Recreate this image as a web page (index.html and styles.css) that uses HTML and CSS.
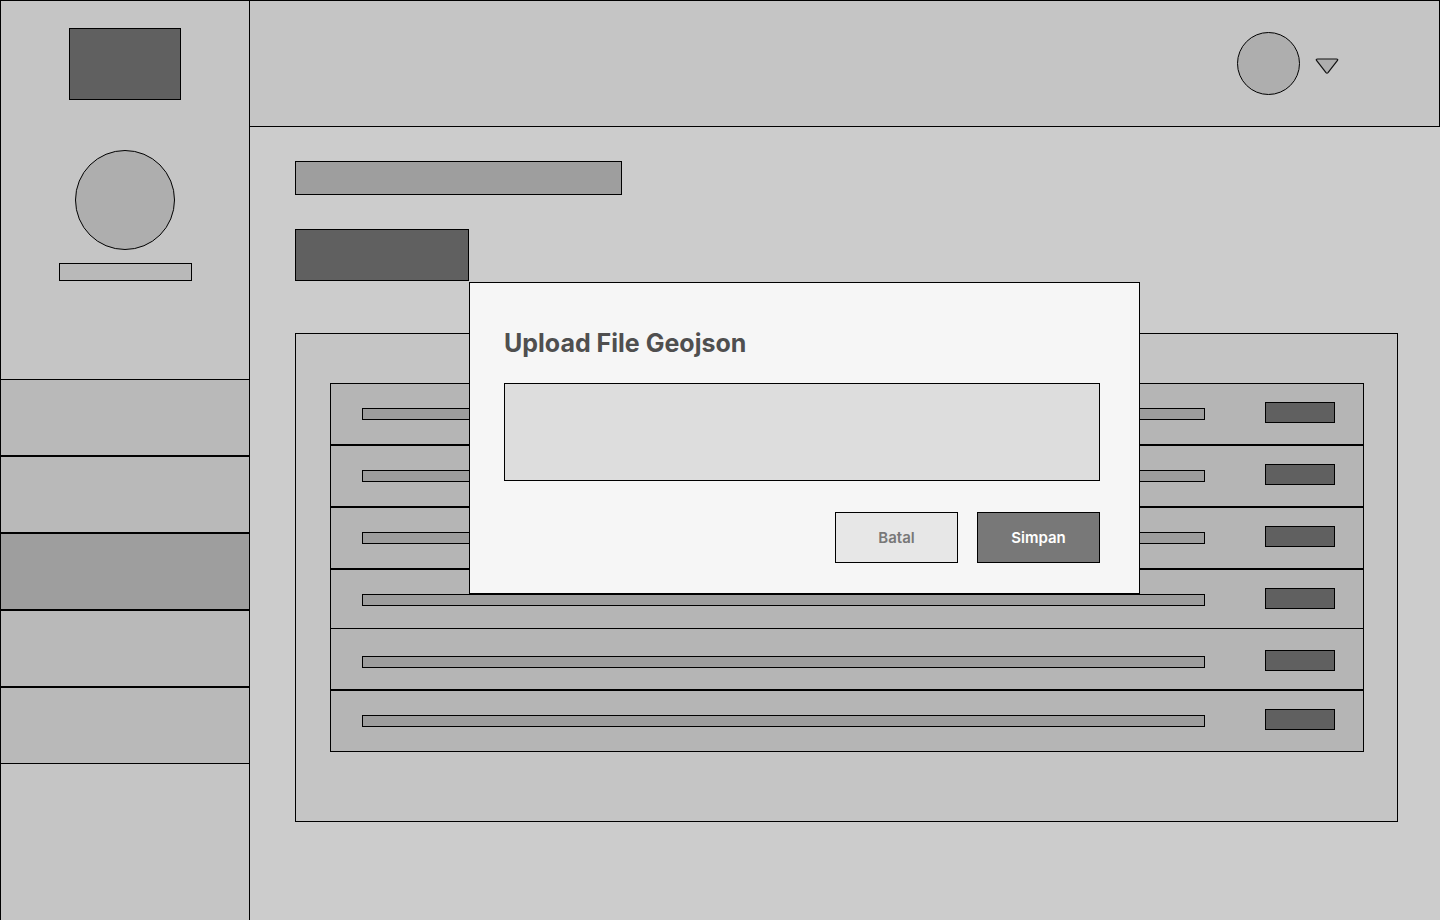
FILE: index.html
```html
<!DOCTYPE html>
<html lang="id">
<head>
<meta charset="utf-8">
<meta name="viewport" content="width=device-width, initial-scale=1">
<title>Upload File Geojson</title>
<link rel="stylesheet" href="styles.css">
</head>
<body>
<div class="app">
  <aside class="sidebar">
    <div class="logo"></div>
    <div class="profile-photo"></div>
    <div class="profile-name"></div>
    <nav class="menu">
      <a class="menu-item" href="#" aria-label="Menu 1"></a>
      <a class="menu-item" href="#" aria-label="Menu 2"></a>
      <a class="menu-item menu-item-active" href="#" aria-label="Menu 3" aria-current="page"></a>
      <a class="menu-item" href="#" aria-label="Menu 4"></a>
      <a class="menu-item" href="#" aria-label="Menu 5"></a>
    </nav>
  </aside>
  <div class="page">
    <header class="topbar">
      <div class="avatar"></div>
      <button class="account-toggle" type="button" aria-label="Akun">
        <svg class="caret" width="24" height="18" viewBox="0 0 24 18" aria-hidden="true">
          <path d="M2.6 2H21.4Q23.6 2 22.3 3.7L13 15.6Q12 16.7 11 15.6L1.7 3.7Q.4 2 2.6 2Z" fill="#aeaeae" stroke="#111" stroke-width="1.2"/>
        </svg>
      </button>
    </header>
    <main class="content">
      <div class="page-title"></div>
      <button class="add-button" type="button" aria-label="Tambah"></button>
      <section class="panel">
        <ul class="records">
          <li class="record"><span class="record-text"></span><button class="record-action" type="button" aria-label="Aksi 1"></button></li>
          <li class="record"><span class="record-text"></span><button class="record-action" type="button" aria-label="Aksi 2"></button></li>
          <li class="record"><span class="record-text"></span><button class="record-action" type="button" aria-label="Aksi 3"></button></li>
          <li class="record"><span class="record-text"></span><button class="record-action" type="button" aria-label="Aksi 4"></button></li>
          <li class="record record-overlap"><span class="record-text"></span><button class="record-action" type="button" aria-label="Aksi 5"></button></li>
          <li class="record"><span class="record-text"></span><button class="record-action" type="button" aria-label="Aksi 6"></button></li>
        </ul>
      </section>
    </main>
  </div>
  <form class="dialog" role="dialog" aria-labelledby="dialog-title">
    <h1 class="dialog-title" id="dialog-title">Upload File Geojson</h1>
    <div class="dropzone">
      <input class="file-input" type="file" aria-labelledby="dialog-title">
    </div>
    <div class="dialog-actions">
      <button class="button" type="button">Batal</button>
      <button class="button button-primary" type="button">Simpan</button>
    </div>
  </form>
</div>
</body>
</html>
```
FILE: styles.css
```css
*,
*::before,
*::after {
  box-sizing: border-box;
}

body {
  margin: 0;
  background: #ccc;
  font-family: Inter, "Liberation Sans", sans-serif;
}

button {
  margin: 0;
  padding: 0;
  border-radius: 0;
  font-family: inherit;
  cursor: pointer;
}

.app {
  position: relative;
  display: flex;
  min-height: 100vh;
}

.sidebar {
  flex: none;
  display: flex;
  flex-direction: column;
  align-items: center;
  width: 250px;
  padding-top: 27px;
  border: 1px solid #000;
  border-bottom: 0;
  background: #c5c5c5;
}

.logo {
  width: 112px;
  height: 72px;
  border: 1px solid #000;
  background: #606060;
}

.profile-photo {
  width: 100px;
  height: 100px;
  margin-top: 50px;
  border: 1px solid #000;
  border-radius: 50%;
  background: #aeaeae;
}

.profile-name {
  width: 133px;
  height: 18px;
  margin-top: 13px;
  border: 1px solid #000;
  background: #b9b9b9;
}

.menu {
  align-self: stretch;
  margin-top: 98px;
}

.menu-item {
  display: block;
  height: 77px;
  border: solid #000;
  border-width: 1px 0;
  background: #b9b9b9;
}

.menu-item-active {
  background: #9e9e9e;
}

.page {
  flex: 1;
  min-width: 0;
}

.topbar {
  display: flex;
  align-items: center;
  justify-content: flex-end;
  gap: 15px;
  height: 127px;
  padding-right: 100px;
  border: 1px solid #000;
  border-left: 0;
  background: #c5c5c5;
}

.avatar {
  width: 63px;
  height: 63px;
  border: 1px solid #000;
  border-radius: 50%;
  background: #aeaeae;
}

.account-toggle {
  padding-top: 4px;
  border: 0;
  background: none;
}

.caret {
  display: block;
}

.content {
  padding: 34px 42px 98px 45px;
}

.page-title {
  width: 327px;
  height: 34px;
  border: 1px solid #000;
  background: #9e9e9e;
}

.add-button {
  display: block;
  width: 174px;
  height: 52px;
  margin-top: 34px;
  border: 1px solid #000;
  background: #606060;
}

.panel {
  margin-top: 52px;
  padding: 49px 33px 69px 34px;
  border: 1px solid #000;
  background: #c5c5c5;
}

.records {
  margin: 0;
  padding: 0;
  list-style: none;
}

.record {
  display: flex;
  align-items: flex-start;
  gap: 60px;
  height: 62px;
  padding: 18px 28px 0 31px;
  border: 1px solid #000;
  background: #b5b5b5;
}

/* Covers the bottom edge of the row above. */
.record-overlap {
  margin-top: -3px;
  padding-top: 21px;
}

.record-text {
  flex: 1;
  height: 12px;
  margin-top: 6px;
  border: 1px solid #000;
  background: #9d9d9d;
}

.record-action {
  width: 70px;
  height: 21px;
  border: 1px solid #000;
  background: #606060;
}

.dialog {
  position: absolute;
  top: 282px;
  left: 469px;
  right: 300px;
  padding: 44px 39px 30px 34px;
  border: 1px solid #000;
  background: #f6f6f6;
}

.dialog-title {
  margin: 0;
  color: #4f4f4f;
  font-size: 25px;
  font-weight: 700;
  line-height: 32px;
}

.dropzone {
  height: 98px;
  margin-top: 24px;
  border: 1px solid #000;
  background: #ddd;
}

.file-input {
  display: block;
  width: 100%;
  height: 100%;
  opacity: 0;
  cursor: pointer;
}

.dialog-actions {
  display: flex;
  justify-content: flex-end;
  gap: 19px;
  margin-top: 31px;
}

.button {
  width: 123px;
  height: 51px;
  border: 1px solid #000;
  background: #e7e7e7;
  color: #787878;
  font-size: 15px;
  font-weight: 600;
}

.button-primary {
  background: #787878;
  color: #fff;
}
```
